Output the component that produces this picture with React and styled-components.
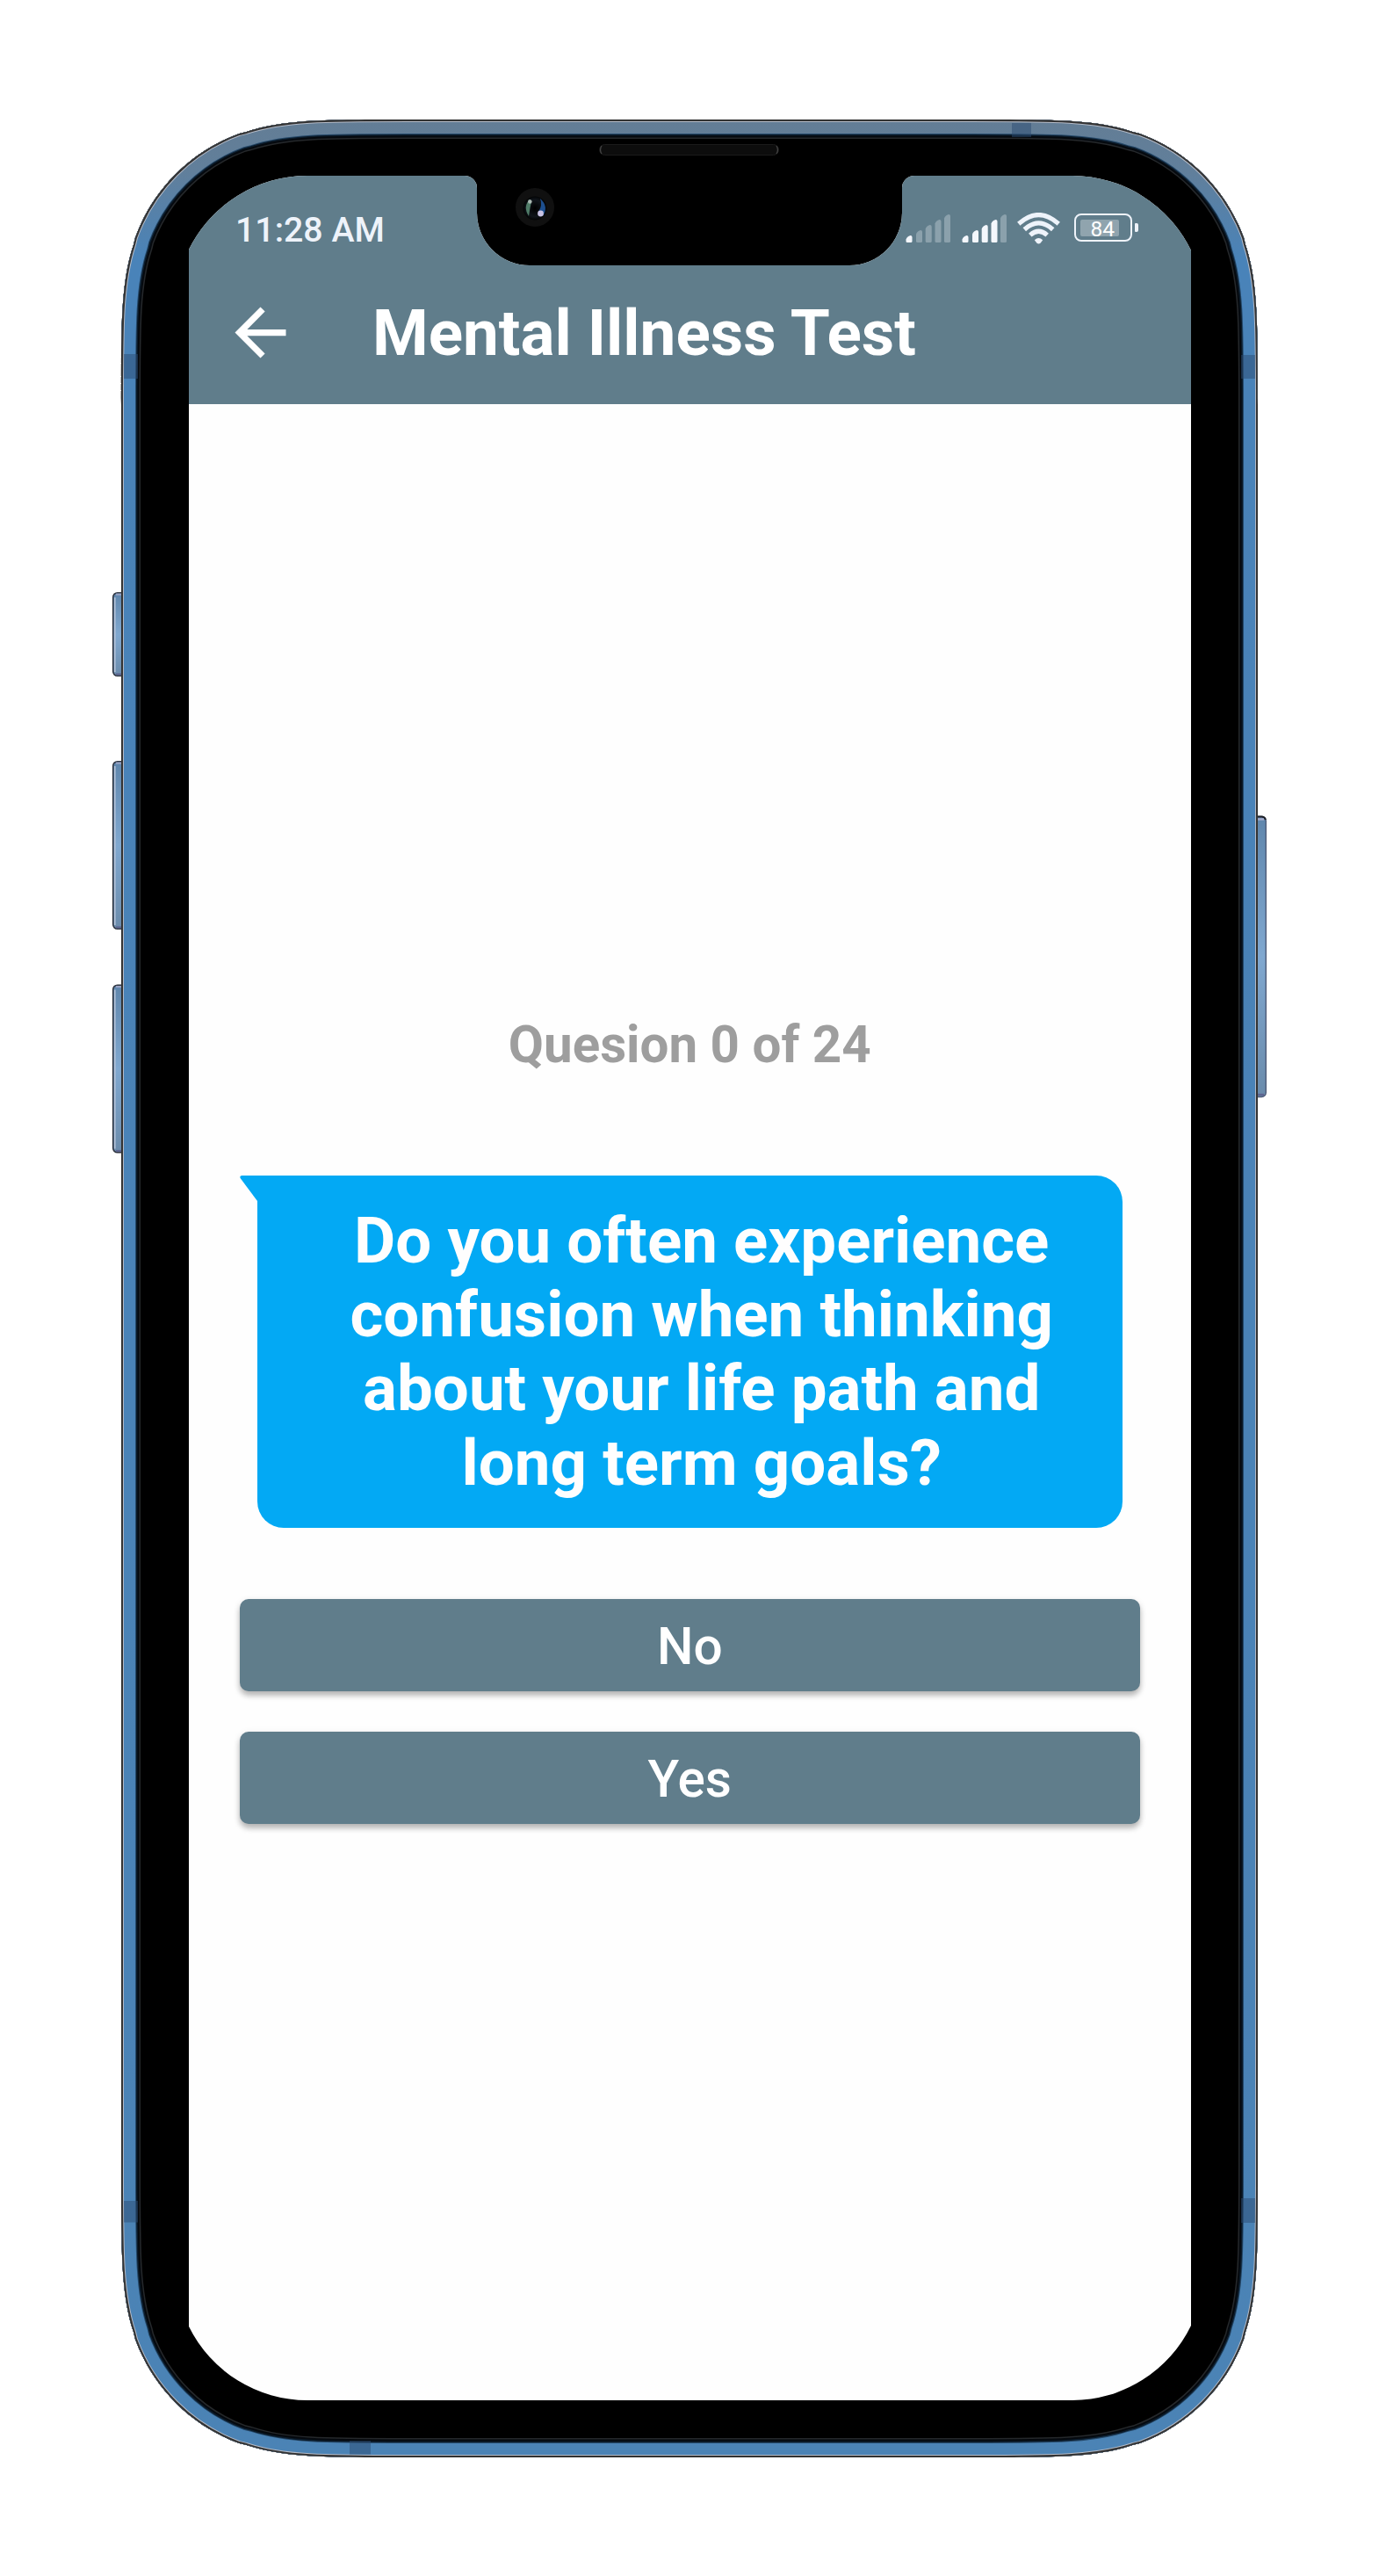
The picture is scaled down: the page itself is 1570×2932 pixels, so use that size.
import React from "react";
import styled, { createGlobalStyle } from "styled-components";

const slate = "#607d8b";
const sky = "#03a9f4";

const GlobalStyle = createGlobalStyle`
  * { box-sizing: border-box; }
  body { margin: 0; background: #fff; font-family: Roboto, "Liberation Sans", sans-serif; }
`;

const Stage = styled.main`
  position: relative;
  width: 1570px;
  height: 2932px;
  padding: 200px 214px 200px 215px;
  overflow: hidden;
`;

const FrameArt = styled.svg`
  position: absolute;
  inset: 0;
  display: block;
`;

const Screen = styled.section`
  position: relative;
  display: flex;
  flex-direction: column;
  width: 1141px;
  height: 2532px;
  background: #fefefe;
  clip-path: path("M0 84 A150.5 150.5 0 0 1 135 0 H314 A14 14 0 0 1 328 14 V42 A60 60 0 0 0 388 102 H752 A60 60 0 0 0 812 42 V14 A14 14 0 0 1 826 0 H1006 A150.5 150.5 0 0 1 1141 85 V2447 A150.5 150.5 0 0 1 1006 2532 H135 A150.5 150.5 0 0 1 0 2448 Z");
`;

const Header = styled.header`
  height: 260px;
  background: ${slate};
  color: #fff;
`;

const StatusBar = styled.div`
  display: flex;
  justify-content: space-between;
  height: 97px;
  padding: 38px 60px 0 53px;
`;

const Clock = styled.span`
  font-size: 39.3px;
  line-height: 48px;
  font-weight: 500;
  color: #eef3fa;
  white-space: nowrap;
`;

const StatusIcons = styled.div`
  display: flex;
  align-items: flex-start;
  padding-top: 5px;
`;

const Signal = styled.svg`
  display: block;
  width: 51px;
  height: 34px;
  margin-right: 12.5px;
`;

const Wifi = styled.svg`
  display: block;
  width: 49px;
  height: 36px;
  margin: -1.5px 15.5px 0 0;
`;

const Battery = styled.div`
  display: flex;
  align-items: center;
  &::after {
    content: "";
    width: 4px;
    height: 10px;
    margin-left: 3px;
    border-radius: 1px 2px 2px 1px;
    background: #eef3fa;
  }
`;

const BatteryCell = styled.div`
  width: 66.5px;
  height: 32px;
  padding: 4px 13px 4px 5px;
  border: 2.4px solid #eef3fa;
  border-radius: 8px;
`;

const BatteryLevel = styled.div`
  height: 19px;
  margin-top: 0.5px;
  padding-left: 12px;
  background: rgba(255, 255, 255, 0.3);
  border-radius: 2px;
  font-size: 24.5px;
  line-height: 21px;
  font-weight: 400;
  color: #fff;
`;

const AppBar = styled.div`
  display: flex;
  align-items: center;
  height: 163px;
  padding-left: 38px;
`;

const BackButton = styled.button`
  display: block;
  width: 87px;
  height: 87px;
  padding: 0;
  border: 0;
  background: none;
  color: #fff;
  svg { display: block; width: 100%; height: 100%; }
`;

const Title = styled.h1`
  margin: 0 0 0 84px;
  font-size: 72.8px;
  line-height: 84px;
  font-weight: 700;
  white-space: nowrap;
`;

const Quiz = styled.div`
  display: flex;
  flex-direction: column;
  padding: 695px 58.5px 0 58px;
`;

const Progress = styled.p`
  margin: 0;
  text-align: center;
  font-size: 58.3px;
  line-height: 68px;
  font-weight: 700;
  color: #9e9e9e;
`;

const Bubble = styled.div`
  display: flex;
  justify-content: center;
  position: relative;
  height: 401px;
  margin: 115px 20px 0 20px;
  padding: 33px 0 0 27px;
  border-radius: 0 30px 30px 30px;
  background: ${sky};
`;

const BubbleTail = styled.svg`
  position: absolute;
  left: -20px;
  top: 0;
  display: block;
`;

const Question = styled.h2`
  margin: 0;
  text-align: center;
  font-size: 72.7px;
  line-height: 84.2px;
  font-weight: 700;
  color: #fefefe;
  white-space: pre-line;
`;

const Answers = styled.div`
  display: flex;
  flex-direction: column;
  gap: 46.5px;
  margin-top: 81px;
`;

const Answer = styled.button`
  height: 104.5px;
  padding: 3px 0 0;
  border: 0;
  border-radius: 10px;
  background: ${slate};
  color: #fff;
  font: 500 58.500px/68px Roboto, "Liberation Sans", sans-serif;
  box-shadow: 0 5px 6px rgba(0, 0, 0, 0.24), 0 2px 9px rgba(0, 0, 0, 0.1);
`;

// Continuous-curvature corner, as multiples of the radius, from the
// vertical edge round to the horizontal one.
const cornerCurve = [
  [0, 1.5287],
  [0, 1.0885],
  [0, 0.8684],
  [0.0655, 0.6699],
  [0.0749, 0.6315],
  [0.1691, 0.3728],
  [0.3728, 0.1691],
  [0.6315, 0.0749],
  [0.6699, 0.0655],
  [0.8684, 0],
  [1.0885, 0],
  [1.5287, 0],
];

function squircle(left, top, right, bottom, r) {
  const corner = (cx, cy, sx, sy, reverse) => {
    const pts = cornerCurve.map(([x, y]) => `${(cx + sx * x * r).toFixed(2)} ${(cy + sy * y * r).toFixed(2)}`);
    if (reverse) pts.reverse();
    return `L${pts[0]} C${pts[1]} ${pts[2]} ${pts[3]} L${pts[4]} C${pts[5]} ${pts[6]} ${pts[7]} L${pts[8]} C${pts[9]} ${pts[10]} ${pts[11]}`;
  };
  const path = [
    corner(left, top, 1, 1, false),
    corner(right, top, -1, 1, true),
    corner(right, bottom, -1, -1, false),
    corner(left, bottom, 1, -1, true),
  ].join(" ");
  return `M${path.slice(1)} Z`;
}

const outline = squircle(138, 136, 1432, 2797, 213);

const sideKeys = [
  { x: 128, y: 674, h: 96 },
  { x: 128, y: 866, h: 192 },
  { x: 128, y: 1120.5, h: 192 },
];

const rings = [
  [44, "#25282b"],
  [41, "#05090e"],
  [37, "#0b1b2a"],
  [34, "#264a6b"],
  [32, "url(#band)"],
  [6, "#b4bac6"],
  [4, "#333333"],
];

const seams = [
  { x: 141, y: 403, w: 16, h: 28 },
  { x: 1413, y: 404, w: 16, h: 27 },
  { x: 141, y: 2505, w: 16, h: 24.5 },
  { x: 1413, y: 2502, w: 16, h: 28 },
  { x: 1152, y: 140, w: 22, h: 16 },
  { x: 398, y: 2778, w: 24, h: 15.5 },
];

function Device() {
  return (
    <FrameArt width="1570" height="2932" viewBox="0 0 1570 2932" aria-hidden="true">
      <defs>
        <linearGradient id="band" gradientUnits="userSpaceOnUse" x1="0" y1="136" x2="0" y2="2797">
          <stop offset="0" stopColor="#637d95" />
          <stop offset="0.022" stopColor="#617f9b" />
          <stop offset="0.06" stopColor="#4983b9" />
          <stop offset="1" stopColor="#4b83b5" />
        </linearGradient>
        <linearGradient id="key" x1="0" y1="0" x2="0" y2="1">
          <stop offset="0" stopColor="#5f86ac" />
          <stop offset="0.5" stopColor="#80a8d0" />
          <stop offset="1" stopColor="#6a8bab" />
        </linearGradient>
        <clipPath id="shell"><path d={outline} /></clipPath>
        <radialGradient id="lens">
          <stop offset="0" stopColor="#000" />
          <stop offset="0.7" stopColor="#10151b" />
          <stop offset="1" stopColor="#030405" />
        </radialGradient>
      </defs>
      {sideKeys.map((k) => (
        <g key={k.y}>
          <rect x={k.x + 0.7} y={k.y + 0.7} width="20" height={k.h - 1.4} rx="5" fill="url(#key)" stroke="#303642" strokeWidth="1.6" />
          <path d={`M${k.x + 2.8} ${k.y + 6} V${k.y + k.h - 5}`} stroke="#b3c2d8" strokeWidth="1.6" />
          <path d={`M${k.x + 4} ${k.y + 2.6} H138`} stroke="#9aa3c4" strokeWidth="2" />
          <path d={`M${k.x + 4} ${k.y + k.h - 2.6} H138`} stroke="#5d6490" strokeWidth="2" />
        </g>
      ))}
      <rect x="1422" y="929.5" width="19.3" height="319" rx="5" fill="url(#key)" stroke="#4f5c78" strokeWidth="1.4" />
      <path d="M1432 929.5 H1437 Q1440 930 1441 933" fill="none" stroke="#1d1f26" strokeWidth="1.8" />
      <path d="M1432 932.5 H1439" stroke="#a5accc" strokeWidth="2.4" />
      <path d="M1432 1246 H1439" stroke="#5d6490" strokeWidth="2.4" />
      <path d={outline} fill="#000" />
      <g clipPath="url(#shell)">
        {rings.map(([width, color]) => (
          <path key={width} d={outline} fill="none" stroke={color} strokeWidth={width} strokeLinejoin="round" />
        ))}
      </g>
      {seams.map((s) => (
        <rect key={`${s.x}-${s.y}`} x={s.x} y={s.y} width={s.w} height={s.h} fill="#2b4c72" opacity="0.5" />
      ))}
      <rect x="682.5" y="164.5" width="204" height="12" rx="6" fill="#0d0d0d" stroke="#1b1b1b" />
      <path d="M685 166 Q682 170.5 685 175 M884 166 Q887 170.5 884 175" fill="none" stroke="#444" strokeWidth="1.3" />
      <circle cx="609" cy="236" r="22" fill="#101010" />
      <circle cx="609" cy="237" r="13.5" fill="url(#lens)" />
      <path d="M603 227 Q595 235 602 246 Q603.5 236 605 229 Z" fill="#4f7b67" />
      <path d="M615 226 Q625 235 618 246 L613 241 Q618 234 615 226 Z" fill="#1d4f8f" />
      <circle cx="603.3" cy="229.5" r="2.3" fill="#a9b8b2" />
      <circle cx="615.5" cy="243" r="3.4" fill="#c9c3e4" />
    </FrameArt>
  );
}

function SignalBars({ active }) {
  const bars = [
    { x: 0.5, y: 25 },
    { x: 12, y: 19 },
    { x: 22.7, y: 13 },
    { x: 33.5, y: 7 },
    { x: 44, y: 1 },
  ];
  return (
    <Signal viewBox="0 0 51 34">
      {bars.map((b, i) => (
        <path
          key={b.x}
          d={`M${b.x} ${b.y + 4.5} Q${b.x + 1} ${b.y + 1} ${b.x + 5} ${b.y} Q${b.x + 7} ${b.y} ${b.x + 7} ${b.y + 2} V31.5 Q${b.x + 7} 33 ${b.x + 5.5} 33 H${b.x + 1.5} Q${b.x} 33 ${b.x} 31.5 Z`}
          fill={i < active ? "#f4f7fc" : "#8ba1ac"}
        />
      ))}
    </Signal>
  );
}

export default function App() {
  return (
    <>
      <GlobalStyle />
      <Stage>
        <Device />
        <Screen>
          <Header>
            <StatusBar>
              <Clock>11:28 AM</Clock>
              <StatusIcons>
                <SignalBars active={1} />
                <SignalBars active={4} />
                <Wifi viewBox="0 0 49 36">
                  <g fill="none" stroke="#eef3fa" strokeWidth="5.2">
                    <path d="M1.8 12.8 Q24.5 -7.6 47.2 12.8" />
                    <path d="M8.3 19.2 Q24.5 4.6 40.7 19.2" />
                    <path d="M14.8 25.6 Q24.5 17 34.2 25.6" />
                  </g>
                  <path d="M19.8 31.3 Q24.5 26.8 29.2 31.3 L26.5 34.8 Q24.5 36.4 22.5 34.8 Z" fill="#eef3fa" />
                </Wifi>
                <Battery>
                  <BatteryCell>
                    <BatteryLevel>84</BatteryLevel>
                  </BatteryCell>
                </Battery>
              </StatusIcons>
            </StatusBar>
            <AppBar>
              <BackButton aria-label="Back">
                <svg viewBox="0 0 24 24" fill="currentColor">
                  <path d="M20 11H7.83l5.59-5.59L12 4l-8 8 8 8 1.41-1.41L7.83 13H20v-2z" />
                </svg>
              </BackButton>
              <Title>Mental Illness Test</Title>
            </AppBar>
          </Header>
          <Quiz>
            <Progress>Quesion 0 of 24</Progress>
            <Bubble>
              <BubbleTail width="22" height="30" viewBox="0 0 22 30">
                <path d="M22 0 H2.5 Q-1 0.5 1 3.5 L20 29 H22 Z" fill={sky} />
              </BubbleTail>
              <Question>
                {"Do you often experience\nconfusion when thinking\nabout your life path and\nlong term goals?"}
              </Question>
            </Bubble>
            <Answers>
              <Answer>No</Answer>
              <Answer>Yes</Answer>
            </Answers>
          </Quiz>
        </Screen>
      </Stage>
    </>
  );
}
